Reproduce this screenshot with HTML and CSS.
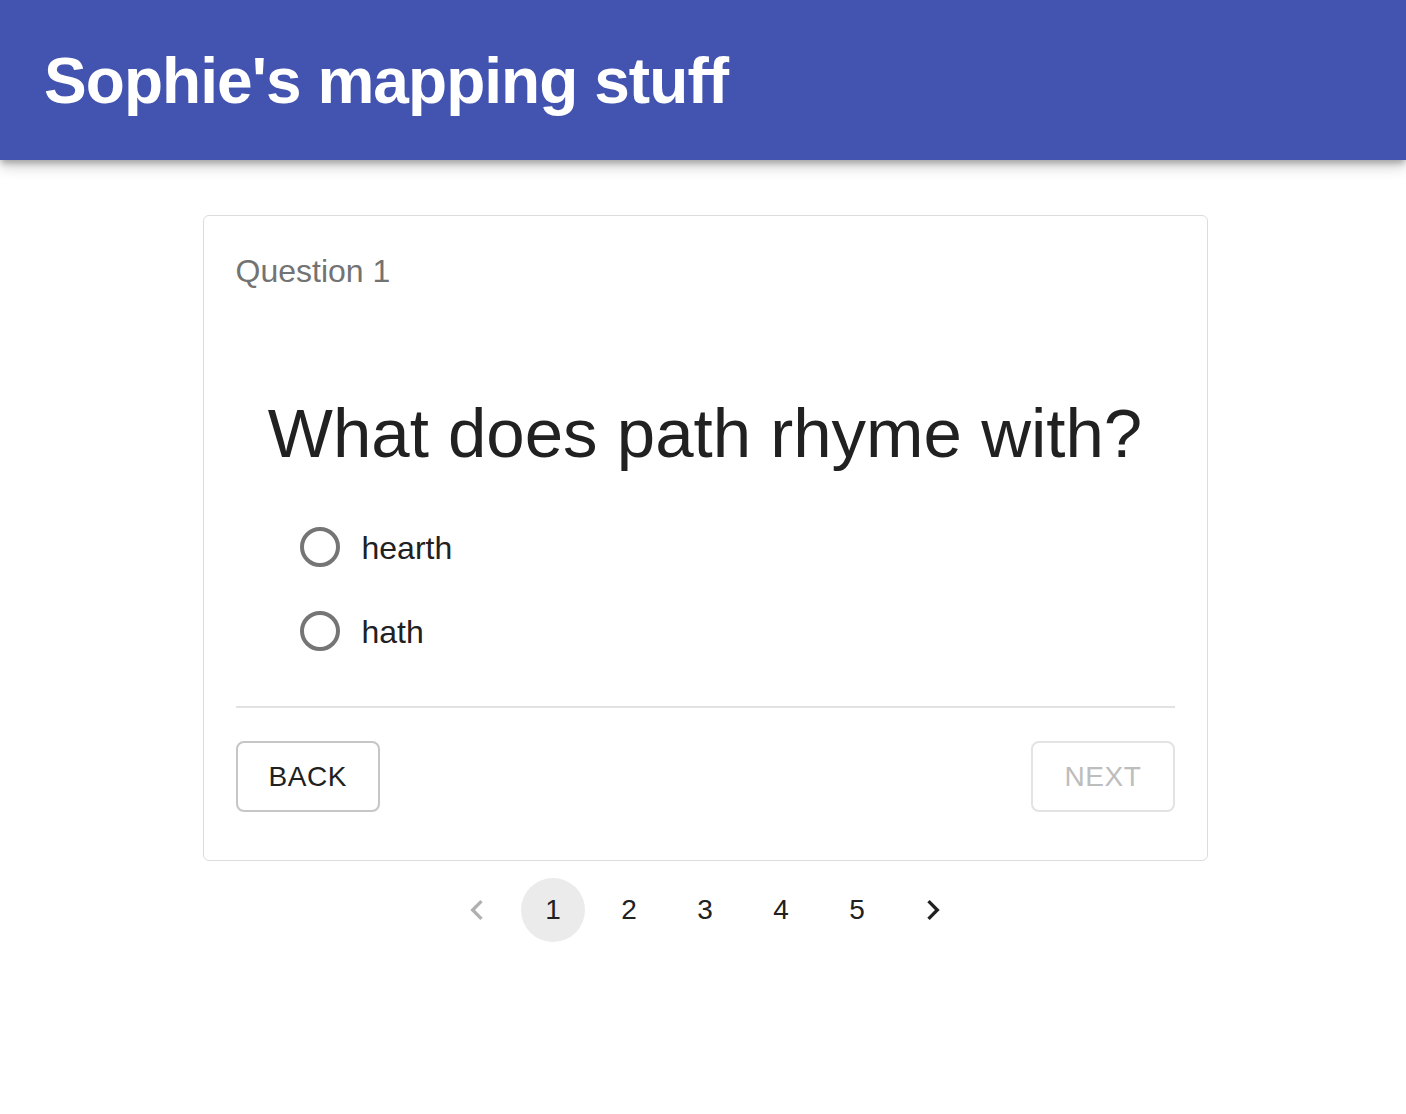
FILE: index.html
```html
<!DOCTYPE html>
<html lang="en">
<head>
<meta charset="utf-8">
<title>Sophie's mapping stuff</title>
<link rel="stylesheet" href="styles.css">
</head>
<body>
<header class="appbar">
  <h1 class="appbar-title">Sophie's mapping stuff</h1>
</header>
<main class="main">
  <section class="card">
    <div class="card-label">Question 1</div>
    <h2 class="question">What does path rhyme with?</h2>
    <div class="options">
      <label class="option">
        <span class="radio"><svg viewBox="0 0 24 24" width="48" height="48"><circle cx="12" cy="12" r="9" fill="none" stroke="#757575" stroke-width="2"/></svg></span>
        <span class="option-text">hearth</span>
      </label>
      <label class="option">
        <span class="radio"><svg viewBox="0 0 24 24" width="48" height="48"><circle cx="12" cy="12" r="9" fill="none" stroke="#757575" stroke-width="2"/></svg></span>
        <span class="option-text">hath</span>
      </label>
    </div>
    <hr class="divider">
    <div class="actions">
      <button class="btn">BACK</button>
      <button class="btn btn-disabled">NEXT</button>
    </div>
  </section>
  <nav class="pager">
    <span class="page-item arrow arrow-disabled"><svg viewBox="0 0 24 24" width="40" height="40"><path d="M15.41 7.41 14 6l-6 6 6 6 1.41-1.41L10.83 12z" fill="currentColor"/></svg></span>
    <span class="page-item page-current">1</span>
    <span class="page-item">2</span>
    <span class="page-item">3</span>
    <span class="page-item">4</span>
    <span class="page-item">5</span>
    <span class="page-item arrow"><svg viewBox="0 0 24 24" width="40" height="40"><path d="M10 6 8.59 7.41 13.17 12l-4.58 4.59L10 18l6-6z" fill="currentColor"/></svg></span>
  </nav>
</main>
</body>
</html>
```

FILE: styles.css
```css
* { box-sizing: border-box; }
html, body { margin: 0; padding: 0; background: #ffffff; }
body { font-family: "Liberation Sans", Arial, Helvetica, sans-serif; color: #212121; }

.appbar {
  height: 160px;
  background: #4253b0;
  display: flex;
  align-items: center;
  padding-left: 44px;
  box-shadow: 0 4px 6px -1px rgba(0,0,0,0.25), 0 8px 12px 0 rgba(0,0,0,0.12), 0 2px 18px 0 rgba(0,0,0,0.08);
  position: relative;
  z-index: 1;
}
.appbar-title {
  margin: 0;
  color: #ffffff;
  font-size: 64px;
  font-weight: 700;
  letter-spacing: -0.95px;
  line-height: 1;
  position: relative;
  top: 1px;
}

.main {
  display: flex;
  flex-direction: column;
  align-items: center;
  padding-top: 55px;
  padding-left: 4px;
}

.card {
  width: 1005px;
  border: 1px solid #dcdcdc;
  border-radius: 6px;
  padding: 32px 32px 48px;
}
.card-label {
  margin-top: 5px;
  font-size: 32px;
  line-height: 37px;
  color: #737373;
}
.question {
  margin: 102px 0 30px;
  font-size: 69px;
  font-weight: 400;
  line-height: 83px;
  text-align: center;
  color: #212121;
}
.options {
  display: flex;
  flex-direction: column;
  padding-left: 60px;
}
.option {
  display: flex;
  align-items: center;
  height: 84px;
}
.radio {
  display: flex;
  width: 48px;
  height: 48px;
}
.option-text {
  margin-left: 18px;
  font-size: 32px;
  color: #212121;
  position: relative;
  top: 1px;
}
.divider {
  margin: 33px 0 33px;
  border: 0;
  border-top: 2px solid #e2e2e2;
  height: 0;
}
.actions {
  display: flex;
  justify-content: space-between;
}
.btn {
  font-family: "Liberation Sans", Arial, Helvetica, sans-serif;
  font-size: 28px;
  letter-spacing: 0.6px;
  height: 71px;
  padding: 0 31px;
  background: #ffffff;
  color: #212121;
  border: 2px solid #c6c6c6;
  border-radius: 8px;
}
.btn-disabled {
  color: #bdbdbd;
  border-color: #e3e3e3;
}

.pager {
  display: flex;
  align-items: center;
  margin-top: 17px;
  gap: 12px;
}
.page-item {
  width: 64px;
  height: 64px;
  border-radius: 50%;
  display: flex;
  align-items: center;
  justify-content: center;
  font-size: 28px;
  color: #212121;
}
.page-current { background: #ebebeb; }
.arrow { color: #212121; }
.arrow-disabled { color: #b0b0b0; }
```
